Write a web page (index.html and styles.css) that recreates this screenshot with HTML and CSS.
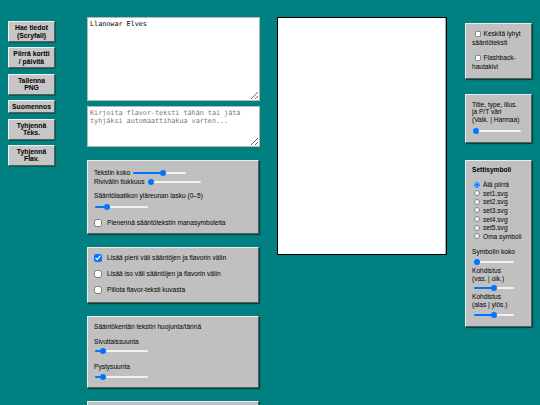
FILE: index.html
```html
<!DOCTYPE html>
<html lang="fi">
<head>
<meta charset="utf-8">
<title>Korttigeneraattori</title>
<link rel="stylesheet" href="styles.css">
</head>
<body>
<div class="page">
  <div class="tools">
    <button class="btn">Hae tiedot<br>(Scryfall)</button>
    <button class="btn">Piirrä kortti<br>/ päivitä</button>
    <button class="btn">Tallenna<br>PNG</button>
    <button class="btn">Suomennos</button>
    <button class="btn">Tyhjennä<br>Teks.</button>
    <button class="btn">Tyhjennä<br>Flav.</button>
  </div>

  <div class="editor">
    <textarea class="rules">Llanowar Elves</textarea>
    <textarea class="flavor" placeholder="Kirjoita flavor-teksti tähän tai jätä tyhjäksi automaattihakua varten..."></textarea>

    <section class="panel p-size">
      <div class="row"><span>Tekstin koko</span><input type="range" min="0" max="100" value="57" style="--v:57%"></div>
      <div class="row"><span>Rivivälin tiukkuus</span><input type="range" min="0" max="100" value="0" style="--v:5.7%"></div>
      <div class="lbl gap6">Sääntölaatikon yläreunan lasku (0–5)</div>
      <input class="slide gap4" type="range" min="0" max="5" value="1" style="--v:23.4%">
      <label class="check gap9"><input type="checkbox"><span>Pienennä sääntötekstin manasymboleita</span></label>
    </section>

    <section class="panel p-gaps">
      <label class="check"><input type="checkbox" checked><span>Lisää pieni väli sääntöjen ja flavorin välin</span></label>
      <label class="check gap8"><input type="checkbox"><span>Lisää iso väli sääntöjen ja flavorin välin</span></label>
      <label class="check gap8"><input type="checkbox"><span>Piilota flavor-teksti kuvasta</span></label>
    </section>

    <section class="panel p-jitter">
      <div class="lbl">Sääntökentän tekstin huojunta/tärinä</div>
      <div class="lbl gap7">Sivuttaissuunta</div>
      <input class="slide gap2" type="range" min="0" max="10" value="1" style="--v:14.5%">
      <div class="lbl gap9">Pystysuunta</div>
      <input class="slide gap3" type="range" min="0" max="10" value="1" style="--v:14.5%">
    </section>

    <section class="panel p-more"></section>
  </div>

  <div class="preview">
    <canvas class="card" width="170" height="238"></canvas>
  </div>

  <div class="options">
    <section class="side p-center">
      <label class="wrap"><input type="checkbox">Keskitä lyhyt sääntöteksti</label>
      <label class="wrap gap7"><input type="checkbox">Flashback-hautakivi</label>
    </section>

    <section class="side p-color">
      <div class="lines">Title, type, illus.<br>ja P/T väri<br>(Valk. | Harmaa)</div>
      <input class="slide wide" type="range" min="0" max="1" value="0" style="--v:6.25%">
    </section>

    <section class="side p-set">
      <div class="title">Settisymboli</div>
      <div class="radios">
        <label class="radio"><input type="radio" name="set" checked><span>Älä piirrä</span></label>
        <label class="radio"><input type="radio" name="set"><span>set1.svg</span></label>
        <label class="radio"><input type="radio" name="set"><span>set2.svg</span></label>
        <label class="radio"><input type="radio" name="set"><span>set3.svg</span></label>
        <label class="radio"><input type="radio" name="set"><span>set4.svg</span></label>
        <label class="radio"><input type="radio" name="set"><span>set5.svg</span></label>
        <label class="radio"><input type="radio" name="set"><span>Oma symboli</span></label>
      </div>
      <div class="lbl sym-size">Symbolin koko</div>
      <input class="slide narrow gap2h" type="range" min="0" max="100" value="0" style="--v:7.5%">
      <div class="lines gap2">Kohdistus<br>(vas. | oik.)</div>
      <input class="slide narrow gap2" type="range" min="-50" max="50" value="0" style="--v:50%">
      <div class="lines gap2">Kohdistus<br>(alas | ylös.)</div>
      <input class="slide narrow gap3" type="range" min="-50" max="50" value="0" style="--v:50%">
    </section>
  </div>
</div>
</body>
</html>
```

FILE: styles.css
```css
html {
  overflow: hidden;
}

body {
  margin: 0;
  background: #008080;
  font-family: "Liberation Sans", Arial, sans-serif;
  font-size: 6.6px;
  color: #000;
}

.page {
  display: flex;
  align-items: flex-start;
  padding: 17px 0 0 8px;
}

/* left button column */
.tools {
  width: 47px;
  margin-top: 4px;
  display: flex;
  flex-direction: column;
  gap: 5.3px;
}

.btn {
  width: 47px;
  margin: 0;
  padding: 2px 0;
  font: bold 6.8px/7.5px "Liberation Sans", Arial, sans-serif;
  color: #000;
  background: #c6c6c6;
  border: 1px solid;
  border-color: #f2f2f2 #5c5c5c #5c5c5c #f2f2f2;
  box-shadow: 1px 1px 0 rgba(0, 0, 0, 0.25);
}

/* middle column */
.editor {
  width: 173px;
  margin-left: 32px;
  display: flex;
  flex-direction: column;
}

textarea {
  display: block;
  box-sizing: border-box;
  width: 173px;
  margin: 0;
  padding: 2px;
  font: 6.75px "DejaVu Sans Mono", monospace;
  color: #000;
  background: #fff;
  border: 1px solid #b8b8b8;
  resize: vertical;
}

textarea::placeholder {
  color: #777;
}

.rules {
  height: 84px;
}

.flavor {
  height: 41px;
  margin-top: 5px;
}

.panel {
  box-sizing: border-box;
  width: 172px;
  margin-top: 13px;
  background: #c0c0c0;
  border: 1px solid;
  border-color: #ececec #5a5a5a #5a5a5a #ececec;
  box-shadow: 1px 1px 1px rgba(0, 0, 0, 0.45);
}

.p-size {
  padding: 7px 6px 6px 6px;
}

.p-gaps {
  padding: 6px 6px 8px 6px;
}

.p-jitter {
  padding: 6px 6px 7px 6px;
}

.p-more {
  height: 40px;
}

.row {
  display: flex;
  align-items: center;
  gap: 3px;
  height: 9px;
}

.lbl {
  line-height: 8px;
  height: 8px;
}

.check {
  display: flex;
  align-items: center;
  gap: 5px;
  height: 8px;
  line-height: 8px;
}

.check input {
  width: 8px;
  height: 8px;
  margin: 0;
  flex: none;
}

/* sliders (base rule has zero specificity so spacing classes win) */
:where(input[type="range"]) {
  -webkit-appearance: none;
  appearance: none;
  width: 53px;
  height: 6px;
  margin: 0;
  padding: 0;
  background: transparent;
  flex: none;
}

.slide {
  display: block;
  margin-left: 1px;
}

input[type="range"]::-webkit-slider-runnable-track {
  height: 2px;
  border-radius: 1px;
  background: linear-gradient(to right, #0075ff var(--v), #f1f1f1 var(--v));
}

input[type="range"]::-webkit-slider-thumb {
  -webkit-appearance: none;
  appearance: none;
  width: 6px;
  height: 6px;
  margin-top: -2px;
  border: none;
  border-radius: 50%;
  background: #0075ff;
}

.gap2 { margin-top: 2px; }
.gap2h { margin-top: 2.5px; }
.gap3 { margin-top: 3px; }
.gap4 { margin-top: 4px; }
.gap6 { margin-top: 6px; }
.gap7 { margin-top: 7px; }
.gap8 { margin-top: 8px; }
.gap9 { margin-top: 9px; }

/* preview */
.preview {
  margin-left: 17px;
}

.card {
  display: block;
  width: 168px;
  height: 236px;
  background: #fff;
  border: 1px solid #000;
  box-shadow: inset -1px 0 0 #a8a8a8;
}

/* right column */
.options {
  width: 67px;
  margin-left: 18px;
  margin-top: 6px;
  display: flex;
  flex-direction: column;
}

.side {
  box-sizing: border-box;
  width: 67px;
  background: #c0c0c0;
  border: 1px solid;
  border-color: #ececec #5a5a5a #5a5a5a #ececec;
  box-shadow: 1px 1px 1px rgba(0, 0, 0, 0.45);
}

.p-center {
  padding: 6px 4px 7px 6px;
}

.p-color {
  margin-top: 15px;
  padding: 5.5px 4px 8px 6px;
}

.p-set {
  margin-top: 17px;
  padding: 5px 4px 8px 6px;
}

.wrap {
  display: block;
  line-height: 8.5px;
}

.wrap input {
  -webkit-appearance: none;
  appearance: none;
  box-sizing: border-box;
  width: 5.5px;
  height: 5.5px;
  margin: 0 3px 0 3px;
  vertical-align: -0.5px;
  background: #fff;
  border: 0.5px solid #8a8a8a;
  border-radius: 1px;
}

.lines {
  line-height: 7.5px;
}

.p-set .lines {
  line-height: 8px;
}

.slide.wide {
  width: 48px;
  margin-top: 4.7px;
}

.slide.narrow {
  width: 40px;
  margin-left: 2px;
}

.title {
  font-weight: bold;
  line-height: 8px;
}

.radios {
  margin-top: 6.7px;
}

.radio {
  display: flex;
  align-items: center;
  height: 8.6px;
}

.radio input {
  width: 6px;
  height: 6px;
  margin: 0 3px 0 2px;
  flex: none;
}

.sym-size {
  margin-top: 7.6px;
}
```
